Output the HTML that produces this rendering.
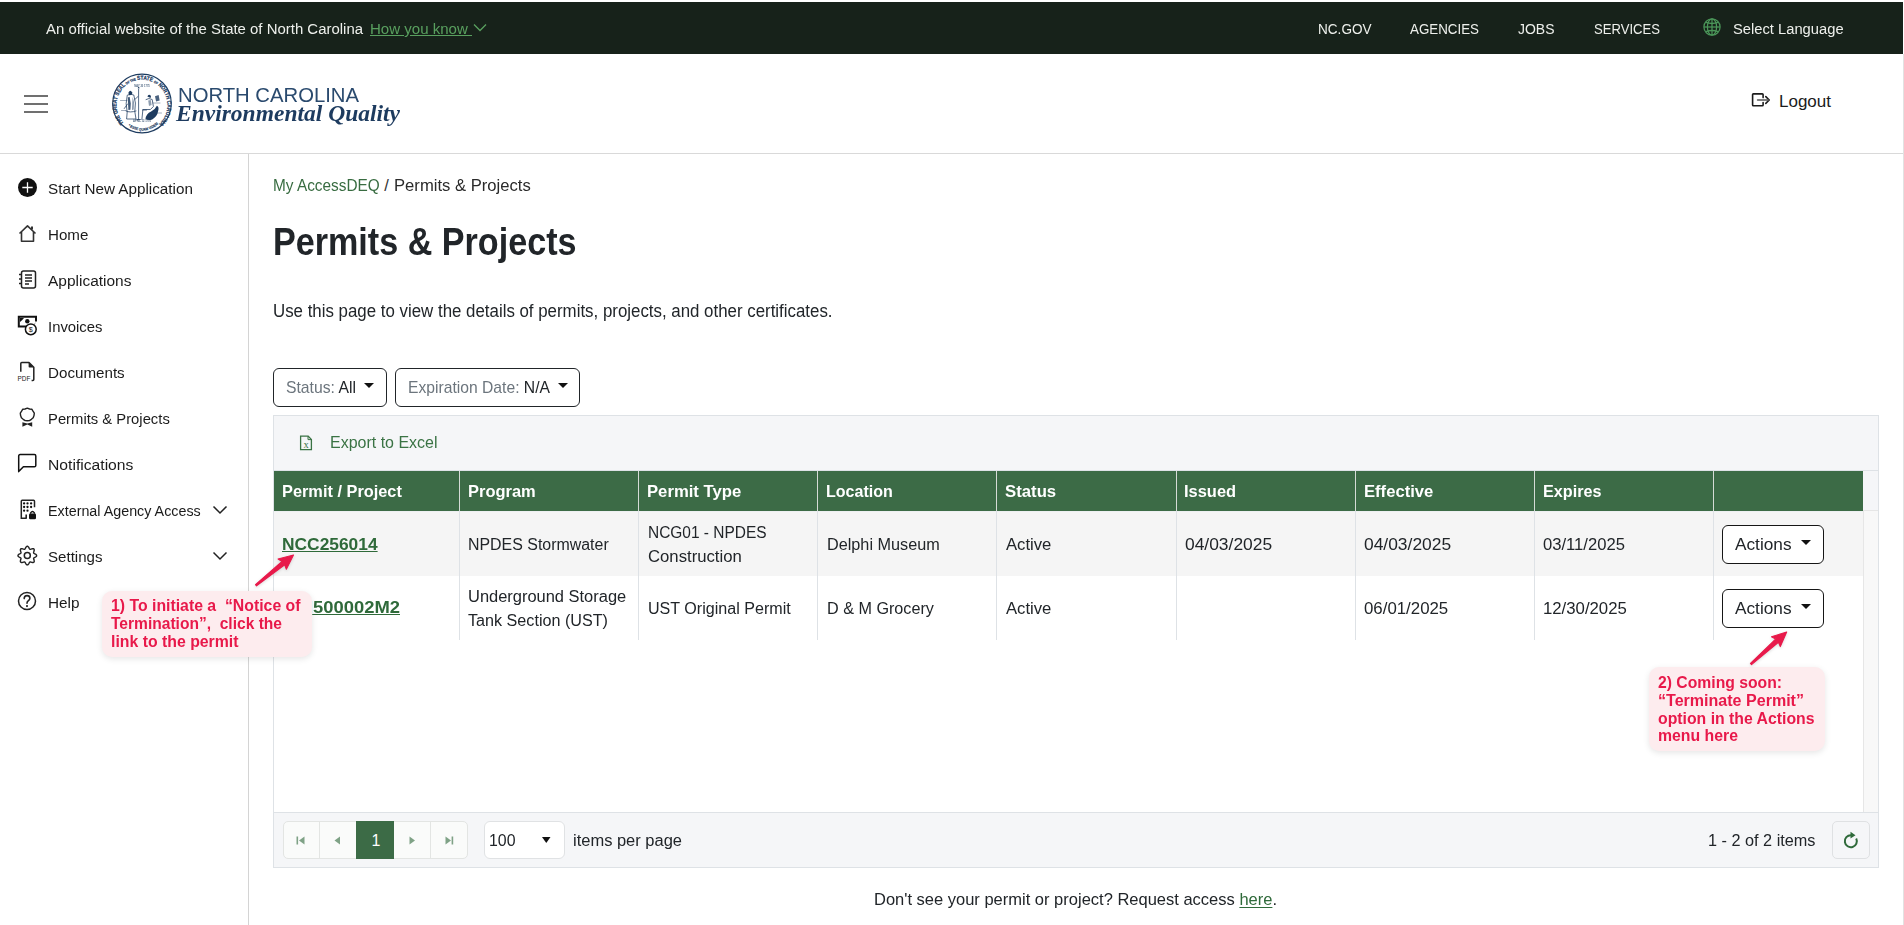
<!DOCTYPE html>
<html><head><meta charset="utf-8"><title>Permits &amp; Projects</title>
<style>
*{box-sizing:border-box;margin:0;padding:0}
html,body{width:1904px;height:925px;overflow:hidden;background:#fff}
body{position:relative;font-family:"Liberation Sans",sans-serif;color:#212529}
.t{position:absolute;white-space:nowrap;line-height:1}
.r{position:absolute;display:block}
</style></head><body>
<div class="r" style="left:0.00px;top:2.00px;width:1903.00px;height:52.00px;background:#17221a;"></div>
<div id="t1" class="t" style="left:46.00px;top:21.00px;font-size:15.50px;color:#eef0ec;font-weight:400;font-family:'Liberation Sans',sans-serif;font-style:normal;transform:scaleX(0.9640);transform-origin:0 0;">An official website of the State of North Carolina</div>
<div id="t2" class="t" style="left:370.00px;top:21.00px;font-size:15.50px;color:#59a05f;font-weight:400;font-family:'Liberation Sans',sans-serif;font-style:normal;transform:scaleX(0.9704);transform-origin:0 0;text-decoration:underline;text-underline-offset:1px;">How you know&nbsp;</div>
<svg class="r" style="left:473.00px;top:23.00px;" width="14" height="9" viewBox="0 0 14 9"><path d="M1 1.5 L7 7.5 L13 1.5" fill="none" stroke="#59a05f" stroke-width="1.3"/></svg>
<div id="t3" class="t" style="left:1318.00px;top:21.00px;font-size:15.50px;color:#eef0ec;font-weight:400;font-family:'Liberation Sans',sans-serif;font-style:normal;transform:scaleX(0.8764);transform-origin:0 0;">NC.GOV</div>
<div id="t4" class="t" style="left:1410.00px;top:21.00px;font-size:15.50px;color:#eef0ec;font-weight:400;font-family:'Liberation Sans',sans-serif;font-style:normal;transform:scaleX(0.8613);transform-origin:0 0;">AGENCIES</div>
<div id="t5" class="t" style="left:1518.00px;top:21.00px;font-size:15.50px;color:#eef0ec;font-weight:400;font-family:'Liberation Sans',sans-serif;font-style:normal;transform:scaleX(0.9016);transform-origin:0 0;">JOBS</div>
<div id="t6" class="t" style="left:1594.00px;top:21.00px;font-size:15.50px;color:#eef0ec;font-weight:400;font-family:'Liberation Sans',sans-serif;font-style:normal;transform:scaleX(0.8450);transform-origin:0 0;">SERVICES</div>
<div id="t7" class="t" style="left:1733.00px;top:21.00px;font-size:15.50px;color:#eef0ec;font-weight:400;font-family:'Liberation Sans',sans-serif;font-style:normal;transform:scaleX(0.9505);transform-origin:0 0;">Select Language</div>
<svg class="r" style="left:1703.00px;top:18.00px;" width="18" height="18" viewBox="0 0 18 18"><g fill="none" stroke="#4b9659" stroke-width="1.25"><circle cx="9" cy="9" r="8.1"/><ellipse cx="9" cy="9" rx="4.6" ry="8.1"/><line x1="9" y1="1" x2="9" y2="17"/><line x1="1" y1="9" x2="17" y2="9"/><path d="M3 4.4 Q9 6.6 15 4.4 M3 13.6 Q9 11.4 15 13.6"/></g></svg>
<div class="r" style="left:24.00px;top:95.00px;width:24.00px;height:2.00px;background:#707070;"></div>
<div class="r" style="left:24.00px;top:103.00px;width:24.00px;height:2.00px;background:#707070;"></div>
<div class="r" style="left:24.00px;top:111.00px;width:24.00px;height:2.00px;background:#707070;"></div>
<svg class="r" style="left:112.00px;top:73.00px;" width="60" height="61" viewBox="0 0 60 61"><defs><path id="sarc" d="M11.8 49.8 A25.4 25.4 0 1 1 48.2 49.8"/><path id="sarc2" d="M13.8 51 A23 23 0 0 0 46.2 51"/></defs><circle cx="30" cy="30.5" r="29.3" fill="none" stroke="#1d3b5f" stroke-width="1.2"/><text font-family="Liberation Sans" font-weight="700" font-size="5.8" fill="#1d3b5f" stroke="#1d3b5f" stroke-width="0.25"><textPath href="#sarc" textLength="120" lengthAdjust="spacingAndGlyphs">THE GREAT SEAL <tspan font-size="3.4">OF THE</tspan> STATE <tspan font-size="3.4">OF</tspan> NORTH CAROLINA</textPath></text><text font-family="Liberation Sans" font-weight="700" font-size="3.8" fill="#1d3b5f" stroke="#1d3b5f" stroke-width="0.15"><textPath href="#sarc2" startOffset="3" textLength="35" lengthAdjust="spacingAndGlyphs">* ESSE QUAM VIDERI *</textPath></text><text x="30" y="13.8" font-family="Liberation Sans" font-weight="700" font-size="2.6" fill="#1d3b5f" text-anchor="middle" opacity=".8">MAY 20 1775</text><text x="30" y="48.8" font-family="Liberation Sans" font-weight="700" font-size="2.6" fill="#1d3b5f" text-anchor="middle" opacity=".85">APRIL 12 1776</text><g fill="none" stroke="#1d3b5f" stroke-width="0.75" stroke-linecap="round" stroke-linejoin="round"><path d="M15.6 22 q3-1.6 6.2 0 l1.6 8 l-0.6 8.5 l1.2 7.5 h-9.4 l0.6-7 l-1-8 z"/><path d="M15.5 31 l-3.2 4.5 M22.8 26.5 l3.2-3 M14 38 q4 2 10 0"/><path d="M26.6 16 v30.5 M24.8 46.5 h3.6"/><path d="M34 26.5 q3-2 6.2 0 l1.2 7 l-3 3 h-7.5 l-1 9.8 M30.5 37 h4"/><path d="M8.5 27.5 h6.5 M41 30 h7 M9.5 37.5 h4.5 M44.5 40 h5" opacity=".55"/></g><g fill="#1d3b5f"><path d="M16.4 19.8 q1.8-3.8 3.8-0.4 q0.4 1.8-1 2.6 l-2.2 0.2z"/><path d="M25.6 15.2 q1-3 2.2 0 z"/><path d="M35.4 23.6 q1.2-3.6 3.6-0.6 l-0.4 2z"/><path d="M15.8 24.5 l1.8-0.8 l1.2 7 l-0.4 6 l-2 0.3 z" opacity=".85"/><path d="M20.6 24 l1.3 5 l-0.3 7.5 l-1.5 0.5z" opacity=".6"/><path d="M33.5 46 q0.6-5.6 5.6-7.6 q4-1.6 5.8-5.6 q2.4 1 1.3 5 q-1 6-6 8.6 q-3.4 1.6-6.7-0.4z"/><path d="M43 23.2 l3.6-1.2 l1.1 5.6 l-3.6 1z" opacity=".8"/><path d="M36.2 27.5 l2.6-0.6 l0.8 5 l-2.6 1z" opacity=".5"/></g></svg>
<div id="t8" class="t" style="left:177.50px;top:86.00px;font-size:19.50px;color:#2a4a6e;font-weight:400;font-family:'Liberation Sans',sans-serif;font-style:normal;transform:scaleX(1.0397);transform-origin:0 0;">NORTH CAROLINA</div>
<div id="t9" class="t" style="left:175.50px;top:102.00px;font-size:23.50px;color:#1d3b5f;font-weight:700;font-family:'Liberation Serif',serif;font-style:italic;transform:scaleX(1.0002);transform-origin:0 0;">Environmental Quality</div>
<svg class="r" style="left:1751.00px;top:92.00px;" width="20" height="16" viewBox="0 0 20 16"><g fill="none" stroke="#1b1b1b" stroke-width="1.6" stroke-linecap="round" stroke-linejoin="round"><path d="M12.1 5.6 V2.6 Q12.1 1.9 11.3 1.9 H2.4 Q1.6 1.9 1.6 2.6 V13 Q1.6 13.7 2.4 13.7 H11.3 Q12.1 13.7 12.1 13 V10.6"/><path d="M14.8 4.6 L18.2 8 L14.8 11.4"/></g><path d="M6.6 8 H17.6" stroke="#555" stroke-width="1.6" stroke-linecap="round"/></svg>
<div id="t10" class="t" style="left:1779.00px;top:93.00px;font-size:17.00px;color:#1b1b1b;font-weight:400;font-family:'Liberation Sans',sans-serif;font-style:normal;transform:scaleX(1.0000);transform-origin:0 0;">Logout</div>
<div class="r" style="left:0.00px;top:153.00px;width:1903.00px;height:1.00px;background:#d9d9d9;"></div>
<div class="r" style="left:1903.00px;top:54.00px;width:1.00px;height:871.00px;background:#e2e2e2;"></div>
<div class="r" style="left:248.00px;top:154.00px;width:1.00px;height:771.00px;background:#d4d4d4;"></div>
<div id="t11" class="t" style="left:48.00px;top:181.00px;font-size:15.50px;color:#1b1b1b;font-weight:400;font-family:'Liberation Sans',sans-serif;font-style:normal;transform:scaleX(0.9835);transform-origin:0 0;">Start New Application</div>
<div id="t12" class="t" style="left:48.00px;top:227.00px;font-size:15.50px;color:#1b1b1b;font-weight:400;font-family:'Liberation Sans',sans-serif;font-style:normal;transform:scaleX(0.9768);transform-origin:0 0;">Home</div>
<div id="t13" class="t" style="left:48.00px;top:273.00px;font-size:15.50px;color:#1b1b1b;font-weight:400;font-family:'Liberation Sans',sans-serif;font-style:normal;transform:scaleX(0.9979);transform-origin:0 0;">Applications</div>
<div id="t14" class="t" style="left:48.00px;top:319.00px;font-size:15.50px;color:#1b1b1b;font-weight:400;font-family:'Liberation Sans',sans-serif;font-style:normal;transform:scaleX(0.9582);transform-origin:0 0;">Invoices</div>
<div id="t15" class="t" style="left:48.00px;top:365.00px;font-size:15.50px;color:#1b1b1b;font-weight:400;font-family:'Liberation Sans',sans-serif;font-style:normal;transform:scaleX(0.9782);transform-origin:0 0;">Documents</div>
<div id="t16" class="t" style="left:48.00px;top:411.00px;font-size:15.50px;color:#1b1b1b;font-weight:400;font-family:'Liberation Sans',sans-serif;font-style:normal;transform:scaleX(0.9554);transform-origin:0 0;">Permits &amp; Projects</div>
<div id="t17" class="t" style="left:48.00px;top:457.00px;font-size:15.50px;color:#1b1b1b;font-weight:400;font-family:'Liberation Sans',sans-serif;font-style:normal;transform:scaleX(1.0114);transform-origin:0 0;">Notifications</div>
<div id="t18" class="t" style="left:48.00px;top:503.00px;font-size:15.50px;color:#1b1b1b;font-weight:400;font-family:'Liberation Sans',sans-serif;font-style:normal;transform:scaleX(0.9231);transform-origin:0 0;">External Agency Access</div>
<div id="t19" class="t" style="left:48.00px;top:549.00px;font-size:15.50px;color:#1b1b1b;font-weight:400;font-family:'Liberation Sans',sans-serif;font-style:normal;transform:scaleX(0.9729);transform-origin:0 0;">Settings</div>
<div id="t20" class="t" style="left:48.00px;top:595.00px;font-size:15.50px;color:#1b1b1b;font-weight:400;font-family:'Liberation Sans',sans-serif;font-style:normal;transform:scaleX(0.9878);transform-origin:0 0;">Help</div>
<svg class="r" style="left:17.00px;top:177.00px;" width="21" height="21" viewBox="0 0 21 21"><circle cx="10.5" cy="10.5" r="9.5" fill="#111"/><path d="M10.5 5.3 V15.7 M5.3 10.5 H15.7" stroke="#fff" stroke-width="1.3"/></svg>
<svg class="r" style="left:18.00px;top:224.00px;" width="19" height="19" viewBox="0 0 19 19"><g fill="none" stroke="#333" stroke-width="1.6" stroke-linejoin="round"><path d="M1.5 9.5 L9.5 1.8 L17.5 9.5"/><path d="M3.5 8 V17.3 H15.5 V8"/><path d="M14 2.5 V5.5" stroke-width="2"/></g></svg>
<svg class="r" style="left:18.00px;top:270.00px;" width="19" height="19" viewBox="0 0 19 19"><g fill="none" stroke="#222" stroke-width="1.5"><rect x="3.5" y="1" width="14" height="17" rx="2"/></g><g stroke="#222" stroke-width="1.3"><path d="M7 5 H14 M7 8 H14 M7 11 H14 M7 14 H11"/><path d="M1 4.5 H4 M1 9 H4 M1 13.5 H4" stroke-width="1.6"/></g></svg>
<svg class="r" style="left:17.00px;top:315.00px;" width="22" height="21" viewBox="0 0 22 21"><g fill="none" stroke="#111" stroke-width="2"><path d="M10.5 11.6 H1.8 V1.8 H19 V6.5"/></g><path d="M3 3 h4 q-1.5 2-4 4z M16.5 11 q2-2 2-4" fill="#111"/><circle cx="10.3" cy="6.3" r="2.2" fill="#111"/><circle cx="13.8" cy="14.3" r="5.4" fill="#fff" stroke="#111" stroke-width="1.5"/><text x="13.8" y="17" font-size="7.2" font-family="Liberation Sans" text-anchor="middle" fill="#111">$</text></svg>
<svg class="r" style="left:17.00px;top:361.00px;" width="20" height="21" viewBox="0 0 20 21"><g fill="none" stroke="#222" stroke-width="1.5" stroke-linejoin="round"><path d="M3.8 10.8 V2.5 Q3.8 1.6 4.8 1.6 H12 L16.8 6.2 V18.6 Q16.8 19.6 15.8 19.6 H14.6"/></g><path d="M11.6 1.6 L16.8 6.6 L12.4 6.6 Q11.6 6.6 11.6 5.8z" fill="#222"/><text x="0.6" y="19.8" font-size="6.4" font-family="Liberation Sans" fill="#222">PDF</text></svg>
<svg class="r" style="left:18.00px;top:407.00px;" width="18" height="21" viewBox="0 0 18 21"><path d="M9.3 1.2 L11.6 2 L13.8 2.2 L15 4.2 L16.3 6.2 L16 8.6 L15.2 10.8 L13.4 12.3 L11.4 13.6 L9.3 13.8 L7.2 13.6 L5.2 12.3 L3.4 10.8 L2.6 8.6 L2.3 6.2 L3.6 4.2 L4.8 2.2 L7 2 Z" fill="none" stroke="#222" stroke-width="1.4" stroke-linejoin="round"/><path d="M4.4 15.2 L4.4 19.8 L9.3 17.6 L14.2 19.8 L14.2 15.2 L9.3 16.6 Z" fill="#222"/></svg>
<svg class="r" style="left:17.00px;top:453.00px;" width="21" height="20" viewBox="0 0 21 20"><path d="M1.7 18.6 V3 Q1.7 1.6 3.1 1.6 H17.4 Q18.8 1.6 18.8 3 V12.4 Q18.8 13.8 17.4 13.8 H6.4 Z" fill="none" stroke="#111" stroke-width="1.5" stroke-linejoin="round"/></svg>
<svg class="r" style="left:20.00px;top:499.00px;" width="17" height="21" viewBox="0 0 17 21"><path d="M6.6 19.3 H1.3 V2.2 Q1.3 1.3 2.2 1.3 H13.6 Q14.5 1.3 14.5 2.2 V8.2" fill="none" stroke="#222" stroke-width="1.5"/><path d="M6.2 15.6 V19.4" stroke="#222" stroke-width="1.6"/><g fill="#111"><circle cx="4.1" cy="4.4" r="1.15"/><circle cx="7.5" cy="4.4" r="1.15"/><circle cx="11.1" cy="4.4" r="1.15"/><circle cx="4.1" cy="8" r="1.15"/><circle cx="7.5" cy="8" r="1.15"/><circle cx="11.1" cy="8" r="1.15"/><circle cx="4.1" cy="11.7" r="1.15"/><circle cx="7.5" cy="11.7" r="1.15"/><rect x="9" y="14.6" width="7" height="5.6" rx="1.2"/></g><path d="M10.6 14.8 V13.8 Q12.5 11.2 14.4 13.8 V14.8" fill="none" stroke="#111" stroke-width="1.3"/></svg>
<svg class="r" style="left:212.00px;top:505.00px;" width="16" height="10" viewBox="0 0 16 10"><path d="M1.5 1.5 L8 8 L14.5 1.5" fill="none" stroke="#222" stroke-width="1.5"/></svg>
<svg class="r" style="left:17.00px;top:545.00px;" width="21" height="21" viewBox="0 0 21 21"><path d="M10.30 1.25 L10.90 1.44 L11.44 1.95 L11.88 2.66 L12.23 3.38 L12.56 3.95 L12.92 4.27 L13.40 4.31 L14.04 4.13 L14.80 3.87 L15.61 3.68 L16.35 3.70 L16.91 3.99 L17.20 4.55 L17.22 5.29 L17.03 6.10 L16.77 6.86 L16.59 7.50 L16.63 7.98 L16.95 8.34 L17.52 8.67 L18.24 9.02 L18.95 9.46 L19.46 10.00 L19.65 10.60 L19.46 11.20 L18.95 11.74 L18.24 12.18 L17.52 12.53 L16.95 12.86 L16.63 13.22 L16.59 13.70 L16.77 14.34 L17.03 15.10 L17.22 15.91 L17.20 16.65 L16.91 17.21 L16.35 17.50 L15.61 17.52 L14.80 17.33 L14.04 17.07 L13.40 16.89 L12.92 16.93 L12.56 17.25 L12.23 17.82 L11.88 18.54 L11.44 19.25 L10.90 19.76 L10.30 19.95 L9.70 19.76 L9.16 19.25 L8.72 18.54 L8.37 17.82 L8.04 17.25 L7.68 16.93 L7.20 16.89 L6.56 17.07 L5.80 17.33 L4.99 17.52 L4.25 17.50 L3.69 17.21 L3.40 16.65 L3.38 15.91 L3.57 15.10 L3.83 14.34 L4.01 13.70 L3.97 13.22 L3.65 12.86 L3.08 12.53 L2.36 12.18 L1.65 11.74 L1.14 11.20 L0.95 10.60 L1.14 10.00 L1.65 9.46 L2.36 9.02 L3.08 8.67 L3.65 8.34 L3.97 7.98 L4.01 7.50 L3.83 6.86 L3.57 6.10 L3.38 5.29 L3.40 4.55 L3.69 3.99 L4.25 3.70 L4.99 3.68 L5.80 3.87 L6.56 4.13 L7.20 4.31 L7.68 4.27 L8.04 3.95 L8.37 3.38 L8.72 2.66 L9.16 1.95 L9.70 1.44 L10.30 1.25Z" fill="none" stroke="#222" stroke-width="1.4" stroke-linejoin="round"/><circle cx="10.3" cy="10.6" r="3" fill="none" stroke="#222" stroke-width="1.5"/></svg>
<svg class="r" style="left:212.00px;top:551.00px;" width="16" height="10" viewBox="0 0 16 10"><path d="M1.5 1.5 L8 8 L14.5 1.5" fill="none" stroke="#222" stroke-width="1.5"/></svg>
<svg class="r" style="left:17.00px;top:591.00px;" width="20" height="20" viewBox="0 0 20 20"><circle cx="10" cy="10" r="8.5" fill="none" stroke="#222" stroke-width="1.5"/><path d="M7.2 7.6 Q7.2 4.6 10 4.6 Q12.9 4.6 12.9 7.2 Q12.9 8.8 11.2 9.8 Q10 10.6 10 12.2" fill="none" stroke="#222" stroke-width="1.6" stroke-linecap="round"/><circle cx="10" cy="15.1" r="1.05" fill="#222"/></svg>
<div id="t21" class="t" style="left:273.00px;top:177.00px;font-size:16.50px;color:#386c41;font-weight:400;font-family:'Liberation Sans',sans-serif;font-style:normal;transform:scaleX(0.9319);transform-origin:0 0;">My AccessDEQ</div>
<div id="t22" class="t" style="left:384.20px;top:177.00px;font-size:16.50px;color:#333;font-weight:400;font-family:'Liberation Sans',sans-serif;font-style:normal;">/</div>
<div id="t23" class="t" style="left:394.00px;top:177.00px;font-size:16.50px;color:#2a2a2a;font-weight:400;font-family:'Liberation Sans',sans-serif;font-style:normal;transform:scaleX(1.0081);transform-origin:0 0;">Permits &amp; Projects</div>
<div id="t24" class="t" style="left:273.00px;top:223.00px;font-size:38.80px;color:#212529;font-weight:700;font-family:'Liberation Sans',sans-serif;font-style:normal;transform:scaleX(0.8797);transform-origin:0 0;">Permits &amp; Projects</div>
<div id="t25" class="t" style="left:273.00px;top:303.00px;font-size:17.50px;color:#212529;font-weight:400;font-family:'Liberation Sans',sans-serif;font-style:normal;transform:scaleX(0.9635);transform-origin:0 0;">Use this page to view the details of permits, projects, and other certificates.</div>
<div class="r" style="left:273px;top:368px;width:114px;height:39px;border:1px solid #212529;border-radius:6px"></div>
<div class="r" style="left:395px;top:368px;width:185px;height:39px;border:1px solid #212529;border-radius:6px"></div>
<div id="t26" class="t" style="left:286.00px;top:379.00px;font-size:17.00px;color:#212529;font-weight:400;font-family:'Liberation Sans',sans-serif;font-style:normal;transform:scaleX(0.9258);transform-origin:0 0;"><span style="color:#6c757d">Status:</span> All</div>
<div id="t27" class="t" style="left:407.50px;top:379.00px;font-size:17.00px;color:#212529;font-weight:400;font-family:'Liberation Sans',sans-serif;font-style:normal;transform:scaleX(0.9220);transform-origin:0 0;"><span style="color:#6c757d">Expiration Date:</span> N/A</div>
<svg class="r" style="left:364.00px;top:383.00px;" width="10" height="5" viewBox="0 0 10 5"><path d="M0 0 H10 L5 5z" fill="#111"/></svg>
<svg class="r" style="left:557.50px;top:383.00px;" width="10" height="5" viewBox="0 0 10 5"><path d="M0 0 H10 L5 5z" fill="#111"/></svg>
<div class="r" style="left:273px;top:415px;width:1606px;height:453px;border:1px solid #dee2e6;background:#fff"></div>
<div class="r" style="left:274.00px;top:416.00px;width:1604.00px;height:55.00px;background:#f5f6f8;"></div>
<svg class="r" style="left:299.00px;top:435.00px;" width="14" height="16" viewBox="0 0 14 16"><path d="M1.6 1.2 H9.2 L12.4 4.4 V14.6 H1.6 Z" fill="none" stroke="#3a7344" stroke-width="1.3"/><path d="M9 1.2 V4.6 H12.4" fill="none" stroke="#3a7344" stroke-width="1"/><text x="7" y="13" font-size="10.5" font-family="Liberation Serif" text-anchor="middle" fill="#3a7344">x</text></svg>
<div id="t28" class="t" style="left:330.00px;top:435.00px;font-size:16.00px;color:#3a7344;font-weight:400;font-family:'Liberation Sans',sans-serif;font-style:normal;transform:scaleX(0.9990);transform-origin:0 0;">Export to Excel</div>
<div class="r" style="left:274.00px;top:470.00px;width:1604.00px;height:1.00px;background:#dee2e6;"></div>
<div class="r" style="left:1863.00px;top:471.00px;width:15.00px;height:40.00px;background:#f5f6f8;"></div>
<div class="r" style="left:274.00px;top:471.00px;width:1589.00px;height:40.00px;background:#3c6b46;"></div>
<div class="r" style="left:1863.00px;top:511.00px;width:15.00px;height:301.00px;background:#f8f8f8;"></div>
<div class="r" style="left:1863.00px;top:511.00px;width:1.00px;height:301.00px;background:#e6e6e6;"></div>
<div class="r" style="left:1863.00px;top:510.00px;width:15.00px;height:1.00px;background:#e6e6e6;"></div>
<div class="r" style="left:274.00px;top:511.00px;width:1589.00px;height:65.00px;background:#f5f5f5;"></div>
<div class="r" style="left:274.00px;top:511.00px;width:1589.00px;height:1.00px;background:#eef0f2;"></div>
<div class="r" style="left:459.00px;top:471.00px;width:1.00px;height:40.00px;background:#d5dbd6;"></div>
<div class="r" style="left:459.00px;top:511.00px;width:1.00px;height:129.00px;background:#dee2e6;"></div>
<div class="r" style="left:638.00px;top:471.00px;width:1.00px;height:40.00px;background:#d5dbd6;"></div>
<div class="r" style="left:638.00px;top:511.00px;width:1.00px;height:129.00px;background:#dee2e6;"></div>
<div class="r" style="left:817.00px;top:471.00px;width:1.00px;height:40.00px;background:#d5dbd6;"></div>
<div class="r" style="left:817.00px;top:511.00px;width:1.00px;height:129.00px;background:#dee2e6;"></div>
<div class="r" style="left:996.00px;top:471.00px;width:1.00px;height:40.00px;background:#d5dbd6;"></div>
<div class="r" style="left:996.00px;top:511.00px;width:1.00px;height:129.00px;background:#dee2e6;"></div>
<div class="r" style="left:1176.00px;top:471.00px;width:1.00px;height:40.00px;background:#d5dbd6;"></div>
<div class="r" style="left:1176.00px;top:511.00px;width:1.00px;height:129.00px;background:#dee2e6;"></div>
<div class="r" style="left:1355.00px;top:471.00px;width:1.00px;height:40.00px;background:#d5dbd6;"></div>
<div class="r" style="left:1355.00px;top:511.00px;width:1.00px;height:129.00px;background:#dee2e6;"></div>
<div class="r" style="left:1534.00px;top:471.00px;width:1.00px;height:40.00px;background:#d5dbd6;"></div>
<div class="r" style="left:1534.00px;top:511.00px;width:1.00px;height:129.00px;background:#dee2e6;"></div>
<div class="r" style="left:1713.00px;top:471.00px;width:1.00px;height:40.00px;background:#d5dbd6;"></div>
<div class="r" style="left:1713.00px;top:511.00px;width:1.00px;height:129.00px;background:#dee2e6;"></div>
<div id="t29" class="t" style="left:281.90px;top:483.00px;font-size:16.50px;color:#fff;font-weight:700;font-family:'Liberation Sans',sans-serif;font-style:normal;transform:scaleX(0.9905);transform-origin:0 0;">Permit / Project</div>
<div id="t30" class="t" style="left:467.80px;top:483.00px;font-size:16.50px;color:#fff;font-weight:700;font-family:'Liberation Sans',sans-serif;font-style:normal;transform:scaleX(0.9977);transform-origin:0 0;">Program</div>
<div id="t31" class="t" style="left:647.30px;top:483.00px;font-size:16.50px;color:#fff;font-weight:700;font-family:'Liberation Sans',sans-serif;font-style:normal;transform:scaleX(1.0104);transform-origin:0 0;">Permit Type</div>
<div id="t32" class="t" style="left:826.20px;top:483.00px;font-size:16.50px;color:#fff;font-weight:700;font-family:'Liberation Sans',sans-serif;font-style:normal;transform:scaleX(0.9716);transform-origin:0 0;">Location</div>
<div id="t33" class="t" style="left:1005.30px;top:483.00px;font-size:16.50px;color:#fff;font-weight:700;font-family:'Liberation Sans',sans-serif;font-style:normal;transform:scaleX(1.0151);transform-origin:0 0;">Status</div>
<div id="t34" class="t" style="left:1184.40px;top:483.00px;font-size:16.50px;color:#fff;font-weight:700;font-family:'Liberation Sans',sans-serif;font-style:normal;transform:scaleX(0.9965);transform-origin:0 0;">Issued</div>
<div id="t35" class="t" style="left:1363.50px;top:483.00px;font-size:16.50px;color:#fff;font-weight:700;font-family:'Liberation Sans',sans-serif;font-style:normal;transform:scaleX(1.0075);transform-origin:0 0;">Effective</div>
<div id="t36" class="t" style="left:1542.50px;top:483.00px;font-size:16.50px;color:#fff;font-weight:700;font-family:'Liberation Sans',sans-serif;font-style:normal;transform:scaleX(0.9795);transform-origin:0 0;">Expires</div>
<div id="t37" class="t" style="left:281.50px;top:536.00px;font-size:17.00px;color:#2f6a3a;font-weight:700;font-family:'Liberation Sans',sans-serif;font-style:normal;transform:scaleX(1.0218);transform-origin:0 0;text-decoration:underline;text-underline-offset:1px;text-decoration-thickness:1px;">NCC256014</div>
<div id="t38" class="t" style="left:300.50px;top:599.00px;font-size:17.00px;color:#2f6a3a;font-weight:700;font-family:'Liberation Sans',sans-serif;font-style:normal;text-decoration:underline;text-underline-offset:1px;text-decoration-thickness:1px;">N</div>
<div id="t39" class="t" style="left:313.00px;top:599.00px;font-size:17.00px;color:#2f6a3a;font-weight:700;font-family:'Liberation Sans',sans-serif;font-style:normal;transform:scaleX(1.0828);transform-origin:0 0;text-decoration:underline;text-underline-offset:1px;text-decoration-thickness:1px;">500002M2</div>
<div id="t40" class="t" style="left:468.10px;top:537.00px;font-size:16.00px;color:#212529;font-weight:400;font-family:'Liberation Sans',sans-serif;font-style:normal;transform:scaleX(0.9952);transform-origin:0 0;">NPDES Stormwater</div>
<div id="t41" class="t" style="left:647.60px;top:525.00px;font-size:16.00px;color:#212529;font-weight:400;font-family:'Liberation Sans',sans-serif;font-style:normal;transform:scaleX(0.9666);transform-origin:0 0;">NCG01 - NPDES</div>
<div id="t42" class="t" style="left:647.60px;top:549.00px;font-size:16.00px;color:#212529;font-weight:400;font-family:'Liberation Sans',sans-serif;font-style:normal;transform:scaleX(1.0442);transform-origin:0 0;">Construction</div>
<div id="t43" class="t" style="left:826.50px;top:537.00px;font-size:16.00px;color:#212529;font-weight:400;font-family:'Liberation Sans',sans-serif;font-style:normal;transform:scaleX(1.0139);transform-origin:0 0;">Delphi Museum</div>
<div id="t44" class="t" style="left:1005.60px;top:537.00px;font-size:16.00px;color:#212529;font-weight:400;font-family:'Liberation Sans',sans-serif;font-style:normal;transform:scaleX(1.0418);transform-origin:0 0;">Active</div>
<div id="t45" class="t" style="left:1184.70px;top:537.00px;font-size:16.00px;color:#212529;font-weight:400;font-family:'Liberation Sans',sans-serif;font-style:normal;transform:scaleX(1.0877);transform-origin:0 0;">04/03/2025</div>
<div id="t46" class="t" style="left:1363.80px;top:537.00px;font-size:16.00px;color:#212529;font-weight:400;font-family:'Liberation Sans',sans-serif;font-style:normal;transform:scaleX(1.0877);transform-origin:0 0;">04/03/2025</div>
<div id="t47" class="t" style="left:1542.80px;top:537.00px;font-size:16.00px;color:#212529;font-weight:400;font-family:'Liberation Sans',sans-serif;font-style:normal;transform:scaleX(1.0381);transform-origin:0 0;">03/11/2025</div>
<div id="t48" class="t" style="left:468.10px;top:589.00px;font-size:16.00px;color:#212529;font-weight:400;font-family:'Liberation Sans',sans-serif;font-style:normal;transform:scaleX(1.0280);transform-origin:0 0;">Underground Storage</div>
<div id="t49" class="t" style="left:468.10px;top:613.00px;font-size:16.00px;color:#212529;font-weight:400;font-family:'Liberation Sans',sans-serif;font-style:normal;transform:scaleX(1.0092);transform-origin:0 0;">Tank Section (UST)</div>
<div id="t50" class="t" style="left:647.60px;top:601.00px;font-size:16.00px;color:#212529;font-weight:400;font-family:'Liberation Sans',sans-serif;font-style:normal;transform:scaleX(1.0052);transform-origin:0 0;">UST Original Permit</div>
<div id="t51" class="t" style="left:826.50px;top:601.00px;font-size:16.00px;color:#212529;font-weight:400;font-family:'Liberation Sans',sans-serif;font-style:normal;transform:scaleX(1.0104);transform-origin:0 0;">D &amp; M Grocery</div>
<div id="t52" class="t" style="left:1005.60px;top:601.00px;font-size:16.00px;color:#212529;font-weight:400;font-family:'Liberation Sans',sans-serif;font-style:normal;transform:scaleX(1.0418);transform-origin:0 0;">Active</div>
<div id="t53" class="t" style="left:1363.80px;top:601.00px;font-size:16.00px;color:#212529;font-weight:400;font-family:'Liberation Sans',sans-serif;font-style:normal;transform:scaleX(1.0515);transform-origin:0 0;">06/01/2025</div>
<div id="t54" class="t" style="left:1542.80px;top:601.00px;font-size:16.00px;color:#212529;font-weight:400;font-family:'Liberation Sans',sans-serif;font-style:normal;transform:scaleX(1.0465);transform-origin:0 0;">12/30/2025</div>
<div class="r" style="left:1722px;top:525px;width:102px;height:39px;border:1px solid #161616;border-radius:6px;background:#fff"></div>
<div id="t55" class="t" style="left:1735.00px;top:536.00px;font-size:17.00px;color:#212529;font-weight:400;font-family:'Liberation Sans',sans-serif;font-style:normal;transform:scaleX(1.0135);transform-origin:0 0;">Actions</div>
<svg class="r" style="left:1801.00px;top:540.00px;" width="10" height="5" viewBox="0 0 10 5"><path d="M0 0 H10 L5 5z" fill="#111"/></svg>
<div class="r" style="left:1722px;top:589px;width:102px;height:39px;border:1px solid #161616;border-radius:6px;background:#fff"></div>
<div id="t56" class="t" style="left:1735.00px;top:600.00px;font-size:17.00px;color:#212529;font-weight:400;font-family:'Liberation Sans',sans-serif;font-style:normal;transform:scaleX(1.0135);transform-origin:0 0;">Actions</div>
<svg class="r" style="left:1801.00px;top:604.00px;" width="10" height="5" viewBox="0 0 10 5"><path d="M0 0 H10 L5 5z" fill="#111"/></svg>
<div class="r" style="left:274.00px;top:812.00px;width:1604.00px;height:1.00px;background:#dee2e6;"></div>
<div class="r" style="left:274.00px;top:813.00px;width:1604.00px;height:54.00px;background:#f5f6f8;"></div>
<div class="r" style="left:282.5px;top:821px;width:185px;height:38px;border:1px solid #e3e5e3;border-radius:5px;background:#fafbfa"></div>
<div class="r" style="left:319.00px;top:822.00px;width:1.00px;height:36.00px;background:#e3e5e3;"></div>
<div class="r" style="left:430.00px;top:822.00px;width:1.00px;height:36.00px;background:#e3e5e3;"></div>
<div class="r" style="left:356.00px;top:821.00px;width:38.00px;height:38.00px;background:#3c6b46;"></div>
<div id="t57" class="t" style="left:371.50px;top:833.00px;font-size:16.00px;color:#fff;font-weight:400;font-family:'Liberation Sans',sans-serif;font-style:normal;">1</div>
<svg class="r" style="left:296.00px;top:835.50px;" width="9" height="9" viewBox="0 0 9 9"><rect x="0.5" y="0.5" width="1.6" height="8" fill="#7fa286"/><path d="M8.5 0.5 V8.5 L3 4.5z" fill="#7fa286"/></svg>
<svg class="r" style="left:334.00px;top:835.50px;" width="7" height="9" viewBox="0 0 7 9"><path d="M6 0.5 V8.5 L0.5 4.5z" fill="#7fa286"/></svg>
<svg class="r" style="left:409.00px;top:835.50px;" width="7" height="9" viewBox="0 0 7 9"><path d="M0.5 0.5 V8.5 L6 4.5z" fill="#7fa286"/></svg>
<svg class="r" style="left:445.00px;top:835.50px;" width="9" height="9" viewBox="0 0 9 9"><path d="M0.5 0.5 V8.5 L6 4.5z" fill="#7fa286"/><rect x="6.6" y="0.5" width="1.6" height="8" fill="#7fa286"/></svg>
<div class="r" style="left:484px;top:821px;width:81px;height:38px;border:1px solid #e0e2e4;border-radius:6px;background:#fff"></div>
<div id="t58" class="t" style="left:489.00px;top:833.00px;font-size:16.00px;color:#212529;font-weight:400;font-family:'Liberation Sans',sans-serif;font-style:normal;transform:scaleX(0.9924);transform-origin:0 0;">100</div>
<svg class="r" style="left:541.50px;top:837.00px;" width="9" height="6" viewBox="0 0 9 6"><path d="M0 0 H8.5 L4.25 6z" fill="#111"/></svg>
<div id="t59" class="t" style="left:572.50px;top:833.00px;font-size:16.00px;color:#212529;font-weight:400;font-family:'Liberation Sans',sans-serif;font-style:normal;transform:scaleX(1.0298);transform-origin:0 0;">items per page</div>
<div id="t60" class="t" style="left:1708.00px;top:833.00px;font-size:16.00px;color:#212529;font-weight:400;font-family:'Liberation Sans',sans-serif;font-style:normal;transform:scaleX(1.0158);transform-origin:0 0;">1 - 2 of 2 items</div>
<div class="r" style="left:1832px;top:821px;width:38px;height:38px;border:1px solid #dfe1e3;border-radius:5px;background:#f5f6f8"></div>
<svg class="r" style="left:1842.00px;top:831.00px;" width="18" height="19" viewBox="0 0 18 19"><path d="M14.2 7.5 A6 6 0 1 1 9 4.2" fill="none" stroke="#2f6a3a" stroke-width="2"/><path d="M8.5 0.8 L13.5 4.2 L8.5 7.6z" fill="#2f6a3a"/></svg>
<div id="t61" class="t" style="left:874.00px;top:891.00px;font-size:17.00px;color:#212529;font-weight:400;font-family:'Liberation Sans',sans-serif;font-style:normal;transform:scaleX(0.9705);transform-origin:0 0;">Don&#39;t see your permit or project? Request access <span style="color:#2f6a3a;text-decoration:underline;text-underline-offset:2px">here</span>.</div>
<div class="r" style="left:101.5px;top:590.5px;width:210px;height:66px;border-radius:10px;background:#fdecee;box-shadow:0 2px 6px rgba(0,0,0,.10)"></div>
<div id="t62" class="t" style="left:111.00px;top:598.00px;font-size:16.00px;color:#e8194a;font-weight:700;font-family:'Liberation Sans',sans-serif;font-style:normal;transform:scaleX(0.9884);transform-origin:0 0;">1) To initiate a &nbsp;“Notice of</div>
<div id="t63" class="t" style="left:111.00px;top:616.00px;font-size:16.00px;color:#e8194a;font-weight:700;font-family:'Liberation Sans',sans-serif;font-style:normal;transform:scaleX(0.9730);transform-origin:0 0;">Termination”, &nbsp;click the</div>
<div id="t64" class="t" style="left:111.00px;top:634.00px;font-size:16.00px;color:#e8194a;font-weight:700;font-family:'Liberation Sans',sans-serif;font-style:normal;transform:scaleX(0.9891);transform-origin:0 0;">link to the permit</div>
<div class="r" style="left:1649px;top:666.5px;width:176px;height:84px;border-radius:10px;background:#fdecee;box-shadow:0 2px 6px rgba(0,0,0,.10)"></div>
<div id="t65" class="t" style="left:1658.00px;top:675.00px;font-size:16.00px;color:#e8194a;font-weight:700;font-family:'Liberation Sans',sans-serif;font-style:normal;transform:scaleX(0.9824);transform-origin:0 0;">2) Coming soon:</div>
<div id="t66" class="t" style="left:1658.00px;top:693.00px;font-size:16.00px;color:#e8194a;font-weight:700;font-family:'Liberation Sans',sans-serif;font-style:normal;transform:scaleX(1.0032);transform-origin:0 0;">“Terminate Permit”</div>
<div id="t67" class="t" style="left:1658.00px;top:711.00px;font-size:16.00px;color:#e8194a;font-weight:700;font-family:'Liberation Sans',sans-serif;font-style:normal;transform:scaleX(0.9874);transform-origin:0 0;">option in the Actions</div>
<div id="t68" class="t" style="left:1658.00px;top:728.00px;font-size:16.00px;color:#e8194a;font-weight:700;font-family:'Liberation Sans',sans-serif;font-style:normal;transform:scaleX(0.9886);transform-origin:0 0;">menu here</div>
<svg class="r" style="left:243.50px;top:542.80px;overflow:visible;filter:drop-shadow(0 1px 1.5px rgba(0,0,0,.15))" width="61.5" height="54.2" viewBox="0 0 61.5 54.2"><path d="M12.50 42.82 L40.69 21.79 L42.35 26.24 L49.50 12.00 L34.07 15.95 L38.06 18.52 L11.50 41.58 Z" fill="#e8194a" stroke="#e8194a" stroke-width="1.1" stroke-linejoin="round"/></svg>
<svg class="r" style="left:1739.00px;top:620.00px;overflow:visible;filter:drop-shadow(0 1px 1.5px rgba(0,0,0,.15))" width="59.7" height="56" viewBox="0 0 59.7 56"><path d="M12.53 44.60 L39.42 22.24 L41.31 26.59 L47.70 12.00 L32.50 16.76 L36.62 19.11 L11.47 43.40 Z" fill="#e8194a" stroke="#e8194a" stroke-width="1.1" stroke-linejoin="round"/></svg>
</body></html>
